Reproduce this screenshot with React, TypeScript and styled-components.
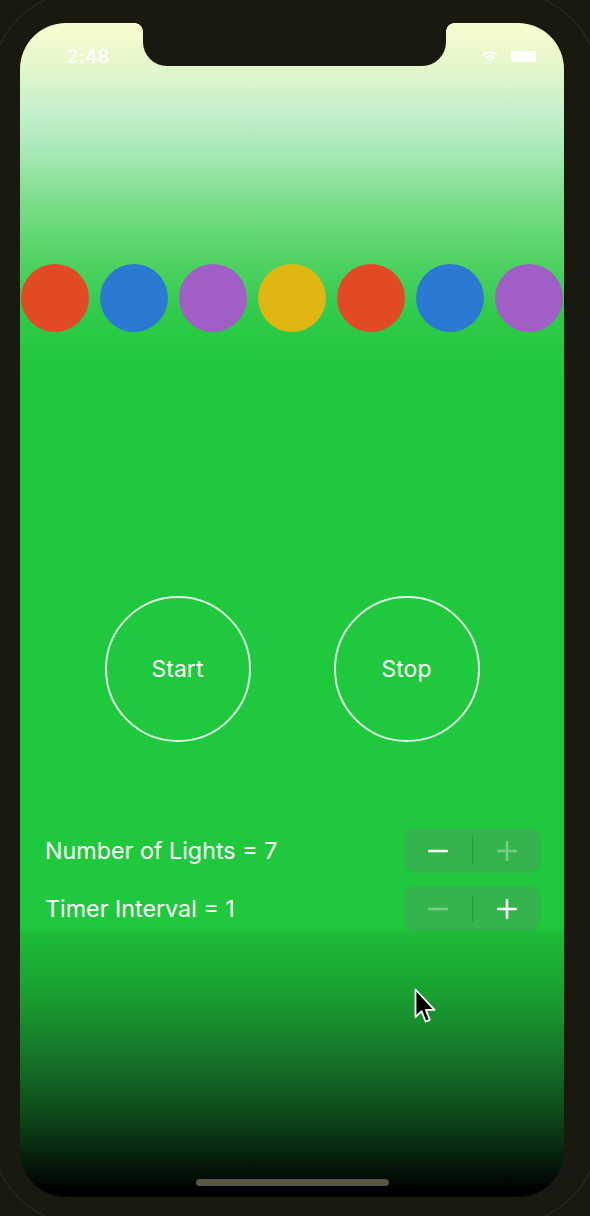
import React from "react";
import styled, { createGlobalStyle } from "styled-components";

const GlobalStyle = createGlobalStyle`
  html, body { margin: 0; padding: 0; background: #19190f; }
  body { font-family: Inter, "Noto Sans", "Liberation Sans", sans-serif; }
  * { box-sizing: border-box; }
`;

const Device = styled.div`
  position: relative;
  width: 590px;
  height: 1216px;
  padding: 23px 26px 19px 20px;
  background: #19190f;
  overflow: hidden;
  &::before {
    content: "";
    position: absolute;
    left: -10px;
    top: -10px;
    right: -10px;
    bottom: -10px;
    border-radius: 96px;
    border: 1.5px solid rgba(255, 255, 255, 0.1);
    pointer-events: none;
  }
`;

const Screen = styled.div`
  position: relative;
  width: 544px;
  height: 1174px;
  border-radius: 46px;
  overflow: hidden;
  display: flex;
  flex-direction: column;
  background: linear-gradient(
    to bottom,
    #f8fcd0 0px,
    #e6f8cc 40px,
    #c4f0cc 90px,
    #a6e8b6 130px,
    #7cdc88 180px,
    #52d366 235px,
    #30cb4a 290px,
    #1fc83c 350px,
    #1fc83c 905px,
    #1cba36 912px,
    #19a030 970px,
    #15782a 1030px,
    #0d4a1a 1090px,
    #041a0a 1140px,
    #000000 1168px
  );
`;

const Notch = styled.div`
  position: absolute;
  top: 0;
  left: 123px;
  width: 303px;
  height: 43px;
  background: #19190f;
  border-radius: 0 0 24px 24px;
  &::before,
  &::after {
    content: "";
    position: absolute;
    top: 0;
    width: 8px;
    height: 8px;
    background: radial-gradient(circle at 0 100%, transparent 7.5px, #19190f 8px);
  }
  &::before {
    left: -8px;
  }
  &::after {
    right: -8px;
    background: radial-gradient(circle at 100% 100%, transparent 7.5px, #19190f 8px);
  }
`;

const StatusBar = styled.div`
  height: 66px;
  display: flex;
  align-items: center;
  justify-content: space-between;
  padding: 0 28px 0 47px;
  color: #ffffff;
`;

const Time = styled.span`
  font-size: 18px;
  font-weight: 600;
  letter-spacing: 0.6px;
`;

const StatusIcons = styled.div`
  display: flex;
  align-items: center;
  gap: 12px;
`;

const Battery = styled.div`
  width: 25px;
  height: 11px;
  border-radius: 3px;
  background: #ffffff;
`;

const LightsRow = styled.div`
  margin-top: 175px;
  display: flex;
  justify-content: space-between;
  padding: 0 1px;
`;

const Light = styled.div<{ $color: string }>`
  width: 68px;
  height: 68px;
  border-radius: 50%;
  background: ${(p) => p.$color};
`;

const ButtonsRow = styled.div`
  margin-top: 264px;
  display: flex;
  justify-content: center;
  gap: 83px;
`;

const RoundButton = styled.button`
  width: 146px;
  height: 146px;
  border-radius: 50%;
  border: 2px solid rgba(255, 255, 255, 0.85);
  background: transparent;
  color: #ffffff;
  font-family: Inter, "Noto Sans", sans-serif;
  font-size: 23px;
  font-weight: 400;
  padding: 0;
  cursor: pointer;
`;

const Controls = styled.div`
  margin-top: 86px;
  display: flex;
  flex-direction: column;
  gap: 13px;
  padding: 0 23px 0 25px;
`;

const ControlRow = styled.div`
  height: 45px;
  display: flex;
  align-items: center;
  justify-content: space-between;
`;

const Label = styled.span`
  color: #ffffff;
  font-size: 23.3px;
  font-weight: 400;
`;

const Stepper = styled.div`
  width: 137px;
  height: 45px;
  border-radius: 12px;
  background: rgba(118, 118, 128, 0.24);
  display: flex;
  align-items: center;
`;

const StepButton = styled.div<{ $disabled?: boolean }>`
  flex: 1;
  height: 100%;
  display: flex;
  align-items: center;
  justify-content: center;
  opacity: ${(p) => (p.$disabled ? 0.35 : 1)};
`;

const Divider = styled.div`
  width: 1px;
  height: 27px;
  background: rgba(0, 0, 0, 0.18);
`;

const Spacer = styled.div`
  flex: 1;
`;

const HomeIndicator = styled.div`
  align-self: center;
  width: 193px;
  height: 7px;
  border-radius: 4px;
  background: #56553f;
  margin-bottom: 11px;
`;

const Cursor = styled.svg`
  position: absolute;
  left: 394px;
  top: 965px;
`;

const MinusIcon = () => (
  <svg width="22" height="22" viewBox="0 0 22 22">
    <rect x="1" y="9.75" width="20" height="2.6" rx="0.8" fill="#fff" />
  </svg>
);

const PlusIcon = () => (
  <svg width="22" height="22" viewBox="0 0 22 22">
    <rect x="1" y="9.75" width="20" height="2.6" rx="0.8" fill="#fff" />
    <rect x="9.7" y="1" width="2.6" height="20" rx="0.8" fill="#fff" />
  </svg>
);

const Wifi = () => (
  <svg width="18" height="13" viewBox="0 0 18 13">
    <path d="M9 12.5 L6.4 9.6 A3.8 3.8 0 0 1 11.6 9.6 Z" fill="#fff" />
    <path d="M4.6 7.6 A6.4 6.4 0 0 1 13.4 7.6" stroke="#fff" strokeWidth="1.8" fill="none" />
    <path d="M2.2 5 A9.8 9.8 0 0 1 15.8 5" stroke="#fff" strokeWidth="1.8" fill="none" />
  </svg>
);

const lights = ["#e24a26", "#2b79d2", "#a15ec6", "#dfb612", "#e24a26", "#2b79d2", "#a15ec6"];

type Ctl = { label: string; minusDisabled: boolean; plusDisabled: boolean };
const controls: Ctl[] = [
  { label: "Number of Lights = 7", minusDisabled: false, plusDisabled: true },
  { label: "Timer Interval = 1", minusDisabled: true, plusDisabled: false },
];

export default function App() {
  return (
    <>
      <GlobalStyle />
      <Device>
        <Screen>
          <Notch />
          <StatusBar>
            <Time>2:48</Time>
            <StatusIcons>
              <Wifi />
              <Battery />
            </StatusIcons>
          </StatusBar>
          <LightsRow>
            {lights.map((c, i) => (
              <Light key={i} $color={c} />
            ))}
          </LightsRow>
          <ButtonsRow>
            <RoundButton>Start</RoundButton>
            <RoundButton>Stop</RoundButton>
          </ButtonsRow>
          <Controls>
            {controls.map((c) => (
              <ControlRow key={c.label}>
                <Label>{c.label}</Label>
                <Stepper>
                  <StepButton $disabled={c.minusDisabled}>
                    <MinusIcon />
                  </StepButton>
                  <Divider />
                  <StepButton $disabled={c.plusDisabled}>
                    <PlusIcon />
                  </StepButton>
                </Stepper>
              </ControlRow>
            ))}
          </Controls>
          <Spacer />
          <HomeIndicator />
          <Cursor width="24" height="38" viewBox="0 0 24 38">
            <path
              d="M1.5 1.5 L1.5 29 L7.6 23.2 L11.6 33.6 L15.8 31.9 L11.9 21.9 L20.5 21.9 Z"
              fill="#000"
              stroke="#fff"
              strokeWidth="1.8"
              strokeLinejoin="round"
            />
          </Cursor>
        </Screen>
      </Device>
    </>
  );
}
